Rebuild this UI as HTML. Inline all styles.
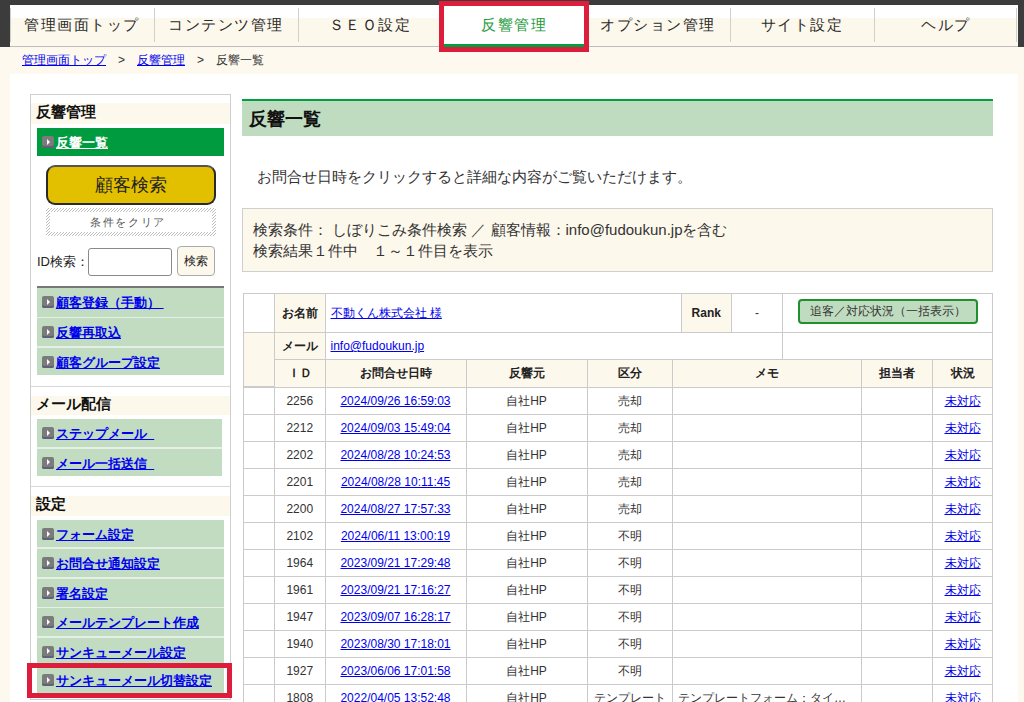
<!DOCTYPE html>
<html lang="ja">
<head>
<meta charset="utf-8">
<style>
*{box-sizing:border-box;margin:0;padding:0}
html,body{width:1024px;height:702px;overflow:hidden}
body{position:relative;background:#fdf9ef;font-family:"Liberation Sans",sans-serif;color:#222}
a{color:#0000ee}
#topbg{position:absolute;left:0;top:0;width:1024px;height:47px;background:#3c3c3c}
#nav{position:absolute;left:10px;top:5px;width:1008px;height:42px;background:linear-gradient(#fff 0,#fff 13px,#fdf8ec 13px);border-bottom:1px solid #bdbdbd}
#nav .t{position:absolute;top:0;height:41px;line-height:40px;text-align:center;font-size:15px;letter-spacing:1.5px;color:#2a2a2a}
#nav .s{position:absolute;top:3px;width:1px;height:34px;background:#cfcfcf}
#crumb{position:absolute;left:22px;top:52px;font-size:12px;color:#333;white-space:nowrap}
#crumb a{color:#0000ee}
#crumb .gt{display:inline-block;width:31px;text-align:center}
#white{position:absolute;left:10px;top:74px;width:1008px;height:628px;background:#fff}
#side{position:absolute;left:30px;top:94px;width:201px;height:606px;border:1px solid #cfcfcf;background:#fff}
.sh{position:absolute;left:0;width:199px;height:20px;background:#fdf8ec;font-size:15px;font-weight:bold;line-height:20px;padding-left:5px;color:#111}
.gi{position:absolute;left:6px;width:187px;background:#c2dcc2;font-size:13px;font-weight:bold;line-height:27px;padding-left:19px;white-space:nowrap}
.gi a{color:#0000ee}
.ic{position:absolute;left:5px;top:8px;width:12px;height:12px;background:#7b7b7b;border-radius:2px;box-shadow:inset 0 -2px 0 #60607a}
.ic:after{content:"";position:absolute;left:4.5px;top:2.5px;border-left:3.6px solid #fff;border-top:3.5px solid transparent;border-bottom:3.5px solid transparent}
.sep{position:absolute;left:0;width:199px;height:1px;background:#d8d8d8}
#main{position:absolute;left:242px;top:99px;width:751px}
#title{position:absolute;left:0;top:0;width:751px;height:37px;border-top:2px solid #00a040;background:#c0dcc0;font-size:18px;font-weight:bold;line-height:37px;padding-left:7px;color:#111}
#desc{position:absolute;left:15px;top:69px;font-size:15px;color:#333;white-space:nowrap}
#cond{position:absolute;left:0;top:109px;width:751px;height:64px;border:1px solid #cfcfcf;background:#fdf8ec;font-size:15px;line-height:20.5px;padding:11px 0 0 10px;color:#333;white-space:nowrap}
table{border-collapse:collapse;table-layout:fixed;position:absolute;left:242px;top:293px;width:751px;font-size:12px;color:#333}
td,th{border:1px solid #cbcbcb;height:27px;text-align:center;white-space:nowrap;overflow:hidden;padding:0}
th{background:#fdf8ec;font-weight:bold;color:#222}
.gi.act{background:#009b3f}
.gi.act a{color:#fff}
.gi.n2,.gbg.n2{width:185px}
.gbg{position:absolute;left:6px;width:187px;background:#e6efe6}
.gi{padding-top:1px}

#ybtn{position:absolute;left:15px;top:70px;width:170px;height:40px;border:2px solid #2a2a2a;border-top-color:#555;border-radius:9px;background:#e2c000;font-size:18px;line-height:37px;text-align:center;color:#222}
#clr{position:absolute;left:15px;top:113px;width:170px;height:28px;background:#fff;font-size:11px;letter-spacing:1.6px;color:#555;text-align:center;line-height:28px;padding-right:6px}

#clr span{position:relative}
#idl{position:absolute;left:6px;top:157px;font-size:13px;line-height:20px;color:#222}
#idin{position:absolute;left:57px;top:153px;width:84px;height:28px;border:1px solid #8a8a8a;border-radius:3px;background:#fff}
#idbtn{position:absolute;left:146px;top:151px;width:38px;height:30px;border:1px solid #aaa;border-radius:4px;background:#fdf8ec;font-size:12px;line-height:28px;text-align:center;color:#222}
#gline{position:absolute;left:6px;top:191px;width:187px;height:2px;background:#777}
#redside{position:absolute;left:27px;top:663px;width:205px;height:35px;border:5px solid #dc1e3c}
#rednav{position:absolute;left:439px;top:1px;width:150px;height:51px;border:5px solid #dc1e3c}
#tt{position:absolute;left:243px;top:293px;width:750px;height:94px;font-size:12px;color:#333}
#tt .c{position:absolute;border:1px solid #cbcbcb;background:#fff;text-align:center;white-space:nowrap}
#tt .h{background:#fdf8ec;font-weight:bold;color:#222}
#tt .l{text-align:left;padding-left:5px}
#gbtn{position:absolute;left:15px;top:5px;width:180px;height:25px;border:2px solid #1f8f2f;border-radius:4px;background:#c0dcc0;font-size:12px;line-height:21px;text-align:center;color:#333}
#tbl{top:359px;left:243px;width:749px}
#tbl td.e{border:none;background:transparent}
#tbl tr.hd th{height:28px}
#tbl td.l2{text-align:left;padding-left:5px}
</style>
</head>
<body>
<div id="topbg"></div>
<div id="nav">
  <div class="s" style="left:0"></div>
  <div class="t" style="left:0;width:144px">管理画面トップ</div>
  <div class="s" style="left:144px"></div>
  <div class="t" style="left:144px;width:144px">コンテンツ管理</div>
  <div class="s" style="left:288px"></div>
  <div class="t" style="left:288px;width:144px">ＳＥＯ設定</div>
  <div class="s" style="left:432px"></div>
  <div class="t" style="left:432px;width:144px;color:#1a9a3a;background:#fff;border-bottom:3px solid #00a040;height:42px">反響管理</div>
  <div class="s" style="left:576px"></div>
  <div class="t" style="left:576px;width:144px">オプション管理</div>
  <div class="s" style="left:720px"></div>
  <div class="t" style="left:720px;width:144px">サイト設定</div>
  <div class="s" style="left:864px"></div>
  <div class="t" style="left:864px;width:144px">ヘルプ</div>
  <div class="s" style="left:1006px"></div>
</div>
<div id="crumb"><a href="#">管理画面トップ</a><span class="gt">&gt;</span><a href="#">反響管理</a><span class="gt">&gt;</span>反響一覧</div>
<div id="white"></div>
<div id="side">
  <div class="sh" style="top:8px;height:21px;line-height:17px">反響管理</div>
  <div class="gi act" style="top:33px;height:28px;line-height:28px"><span class="ic"></span><a href="#">反響一覧</a></div>
  <div id="ybtn">顧客検索</div>
  <div id="clr"><svg width="170" height="28" style="position:absolute;left:0;top:0"><defs><pattern id="hp" width="3" height="3" patternUnits="userSpaceOnUse"><rect x="0" y="2" width="1" height="1" fill="#bdbdbd"/><rect x="1" y="1" width="1" height="1" fill="#bdbdbd"/><rect x="2" y="0" width="1" height="1" fill="#bdbdbd"/></pattern></defs><rect width="170" height="28" fill="url(#hp)"/><rect x="4" y="4" width="162" height="20" fill="#fff"/></svg><span>条件をクリア</span></div>
  <div id="idl">ID検索：</div>
  <div id="idin"></div>
  <div id="idbtn">検索</div>
  <div id="gline"></div>
  <div class="gbg" style="top:193px;height:87px"></div>
  <div class="gi" style="top:193px;height:28.5px"><span class="ic"></span><a href="#">顧客登録（手動）&nbsp;</a></div>
  <div class="gi" style="top:223.3px;height:28px"><span class="ic"></span><a href="#">反響再取込</a></div>
  <div class="gi" style="top:253.3px;height:26.7px"><span class="ic"></span><a href="#">顧客グループ設定</a></div>
  <div class="sep" style="top:291px"></div>
  <div class="sh" style="top:301px;height:19px;line-height:15px">メール配信</div>
  <div class="gbg n2" style="top:324.2px;height:56.8px"></div>
  <div class="gi n2" style="top:324.2px;height:27.6px"><span class="ic"></span><a href="#">ステップメール&nbsp;&nbsp;</a></div>
  <div class="gi n2" style="top:353.6px;height:27.4px"><span class="ic"></span><a href="#">メール一括送信&nbsp;&nbsp;</a></div>
  <div class="sep" style="top:391px"></div>
  <div class="sh" style="top:401px;height:20px;line-height:16px">設定</div>
  <div class="gbg" style="top:425px;height:173.5px"></div>
  <div class="gi" style="top:425px;height:27.4px"><span class="ic"></span><a href="#">フォーム設定</a></div>
  <div class="gi" style="top:454.2px;height:28px"><span class="ic"></span><a href="#">お問合せ通知設定</a></div>
  <div class="gi" style="top:484px;height:27.5px"><span class="ic"></span><a href="#">署名設定</a></div>
  <div class="gi" style="top:513.3px;height:27.5px"><span class="ic"></span><a href="#">メールテンプレート作成</a></div>
  <div class="gi" style="top:542.6px;height:27px"><span class="ic"></span><a href="#">サンキューメール設定</a></div>
  <div class="gi" style="top:571.4px;height:27.1px"><span class="ic"></span><a href="#">サンキューメール切替設定</a></div>
</div>
<div id="redside"></div>
<div id="rednav"></div>
<div id="main">
  <div id="title">反響一覧</div>
  <div id="desc">お問合せ日時をクリックすると詳細な内容がご覧いただけます。</div>
  <div id="cond">検索条件： しぼりこみ条件検索 ／ 顧客情報：info@fudoukun.jpを含む<br>検索結果１件中　１～１件目を表示</div>
</div>
<div id="tt">
<div class="c" style="left:0;top:0;width:32px;height:40px"></div>
<div class="c h" style="left:31px;top:0;width:51.5px;height:40px;line-height:38px">お名前</div>
<div class="c l" style="left:81.5px;top:0;width:357px;height:40px;line-height:38px"><a href="#">不動くん株式会社 様</a></div>
<div class="c h" style="left:437.5px;top:0;width:51.5px;height:40px;line-height:38px;font-family:'Liberation Sans',sans-serif">Rank</div>
<div class="c" style="left:488px;top:0;width:52px;height:40px;line-height:38px">-</div>
<div class="c" style="left:539px;top:0;width:211px;height:40px"><div id="gbtn">追客／対応状況（一括表示）</div></div>
<div class="c h" style="left:0;top:39px;width:32px;height:55px"></div>
<div class="c h" style="left:31px;top:39px;width:51.5px;height:28px;line-height:26px">メール</div>
<div class="c l" style="left:81.5px;top:39px;width:458.5px;height:28px;line-height:26px"><a href="#">info@fudoukun.jp</a></div>
<div class="c" style="left:539px;top:39px;width:211px;height:28px"></div>
</div>
<table id="tbl">
<colgroup><col style="width:31px"><col style="width:50.5px"><col style="width:141px"><col style="width:121px"><col style="width:85.5px"><col style="width:188.5px"><col style="width:71.5px"><col style="width:60px"></colgroup>
<tr class="hd"><td class="e"></td><th>ＩＤ</th><th>お問合せ日時</th><th>反響元</th><th>区分</th><th>メモ</th><th>担当者</th><th>状況</th></tr>
<tr><td></td><td>2256</td><td><a href="#">2024/09/26 16:59:03</a></td><td>自社HP</td><td>売却</td><td></td><td></td><td><a href="#">未対応</a></td></tr>
<tr><td></td><td>2212</td><td><a href="#">2024/09/03 15:49:04</a></td><td>自社HP</td><td>売却</td><td></td><td></td><td><a href="#">未対応</a></td></tr>
<tr><td></td><td>2202</td><td><a href="#">2024/08/28 10:24:53</a></td><td>自社HP</td><td>売却</td><td></td><td></td><td><a href="#">未対応</a></td></tr>
<tr><td></td><td>2201</td><td><a href="#">2024/08/28 10:11:45</a></td><td>自社HP</td><td>売却</td><td></td><td></td><td><a href="#">未対応</a></td></tr>
<tr><td></td><td>2200</td><td><a href="#">2024/08/27 17:57:33</a></td><td>自社HP</td><td>売却</td><td></td><td></td><td><a href="#">未対応</a></td></tr>
<tr><td></td><td>2102</td><td><a href="#">2024/06/11 13:00:19</a></td><td>自社HP</td><td>不明</td><td></td><td></td><td><a href="#">未対応</a></td></tr>
<tr><td></td><td>1964</td><td><a href="#">2023/09/21 17:29:48</a></td><td>自社HP</td><td>不明</td><td></td><td></td><td><a href="#">未対応</a></td></tr>
<tr><td></td><td>1961</td><td><a href="#">2023/09/21 17:16:27</a></td><td>自社HP</td><td>不明</td><td></td><td></td><td><a href="#">未対応</a></td></tr>
<tr><td></td><td>1947</td><td><a href="#">2023/09/07 16:28:17</a></td><td>自社HP</td><td>不明</td><td></td><td></td><td><a href="#">未対応</a></td></tr>
<tr><td></td><td>1940</td><td><a href="#">2023/08/30 17:18:01</a></td><td>自社HP</td><td>不明</td><td></td><td></td><td><a href="#">未対応</a></td></tr>
<tr><td></td><td>1927</td><td><a href="#">2023/06/06 17:01:58</a></td><td>自社HP</td><td>不明</td><td></td><td></td><td><a href="#">未対応</a></td></tr>
<tr><td></td><td>1808</td><td><a href="#">2022/04/05 13:52:48</a></td><td>自社HP</td><td>テンプレート</td><td class="l2">テンプレートフォーム：タイ…</td><td></td><td><a href="#">未対応</a></td></tr>
</table>
</body>
</html>
